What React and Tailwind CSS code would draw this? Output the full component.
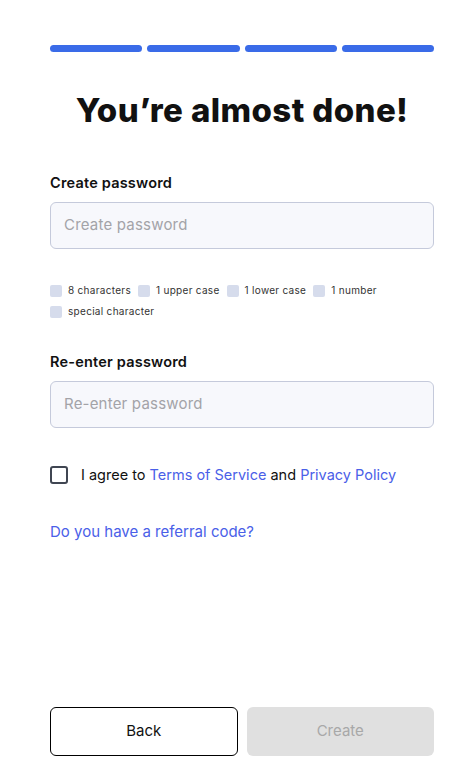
const rules = ["8 characters", "1 upper case", "1 lower case", "1 number", "special character"];

function Field({ label, placeholder }) {
  return (
    <div className="flex flex-col">
      <label className="text-[14.5px] font-semibold text-[#111] leading-5 tracking-[0.2px]">{label}</label>
      <div className="mt-[9px] h-[47px] rounded-[6px] border border-[#c5cadb] bg-[#f7f8fc] px-[13px] flex items-center text-[15px] text-[#a3a3a8] tracking-[0.2px]">
        {placeholder}
      </div>
    </div>
  );
}

export default function App() {
  return (
    <div className="w-[471px] h-[778px] bg-white pl-[50px] pr-[37px] pt-[45px] pb-[22px] flex flex-col font-['Inter',sans-serif] text-[#111]">
      <div className="grid grid-cols-4 gap-[5px]">
        {[0, 1, 2, 3].map((i) => (
          <div key={i} className="h-[7px] rounded-full bg-[#3a6be8]" />
        ))}
      </div>

      <h1 className="mt-[37px] text-center text-[33px] font-extrabold tracking-[0.4px] leading-[42px]">You’re almost done!</h1>

      <div className="mt-[42px]">
        <Field label="Create password" placeholder="Create password" />
      </div>

      <div className="mt-[35px] flex flex-wrap gap-x-[7px] gap-y-[8px]">
        {rules.map((r) => (
          <div key={r} className="flex items-center gap-[6px] text-[10px] text-[#333] leading-[13px] tracking-[0.3px]">
            <span className="w-[12px] h-[12px] rounded-[2px] bg-[#d6dcec]" />
            {r}
          </div>
        ))}
      </div>

      <div className="mt-[34px]">
        <Field label="Re-enter password" placeholder="Re-enter password" />
      </div>

      <div className="mt-[36px] flex items-center gap-[13px] text-[14.5px]">
        <span className="w-[18px] h-[18px] rounded-[3px] border-2 border-[#404652]" />
        <span>
          I agree to <span className="text-[#4a60e8]">Terms of Service</span> and{" "}
          <span className="text-[#4a60e8]">Privacy Policy</span>
        </span>
      </div>

      <div className="mt-[36px] text-[15px] text-[#4a60e8] leading-5">Do you have a referral code?</div>

      <div className="mt-auto grid grid-cols-2 gap-[9px]">
        <button className="h-[49px] rounded-[6px] border border-black bg-white text-[15px] text-[#111]">Back</button>
        <button className="h-[49px] rounded-[6px] bg-[#e0e0e0] text-[15px] text-[#a8a8a8]">Create</button>
      </div>
    </div>
  );
}
